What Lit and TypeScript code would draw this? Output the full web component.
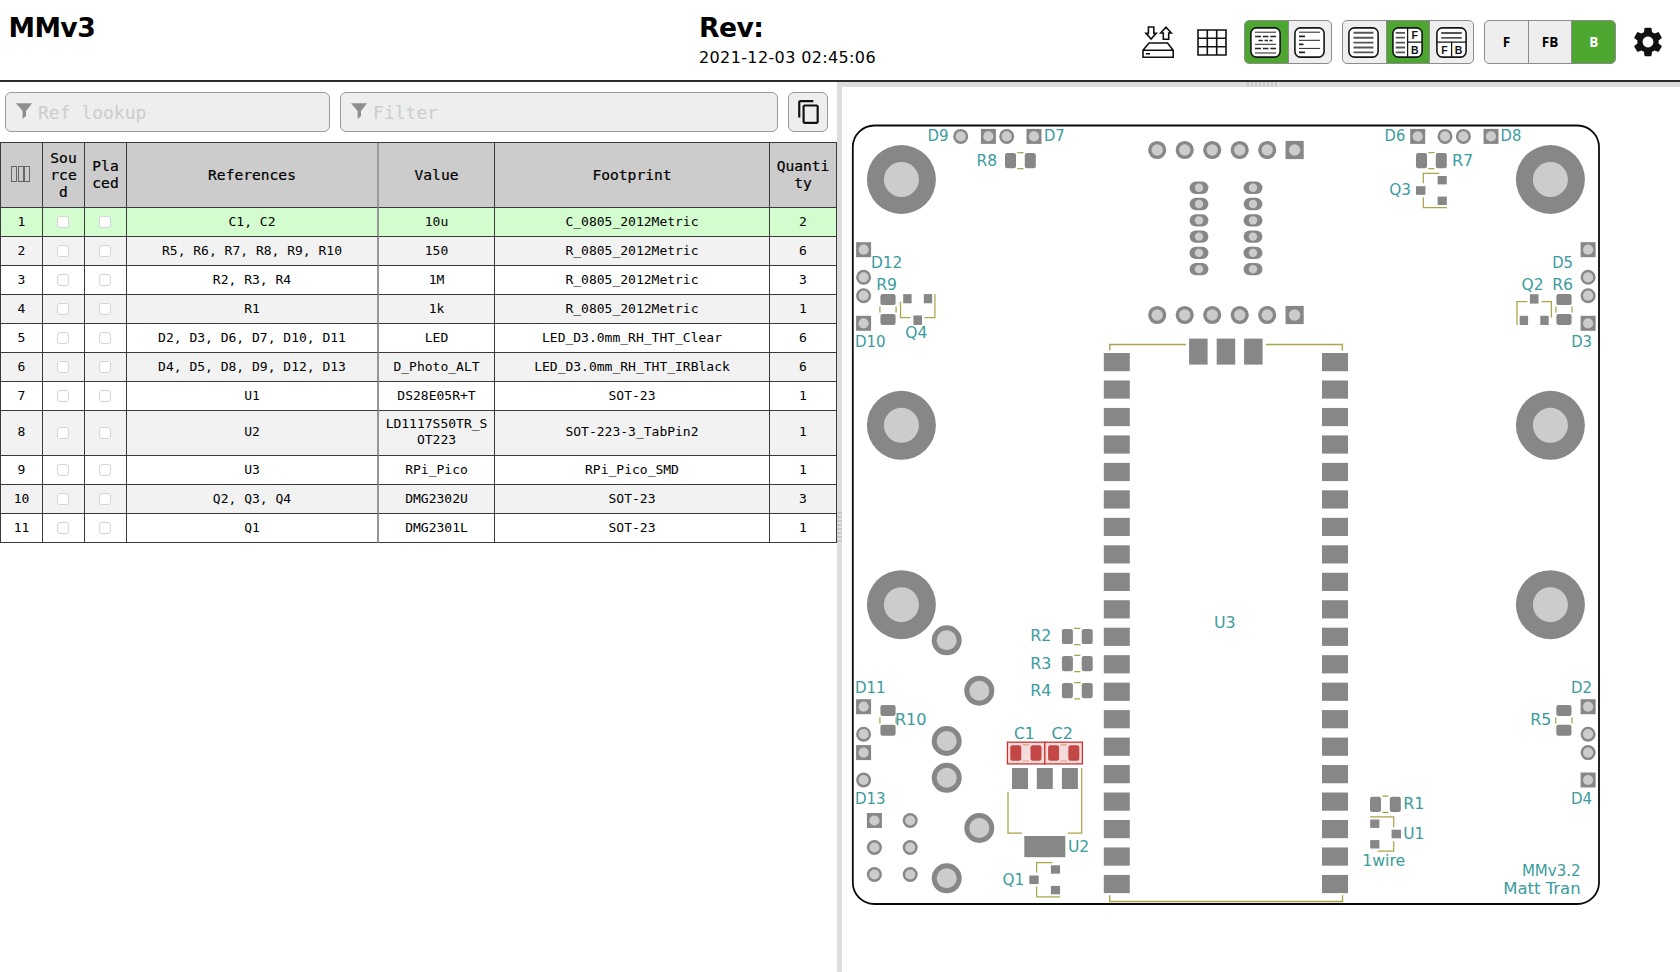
import { LitElement, html, svg, css } from "lit";
import { customElement } from "lit/decorators.js";

const ROWS: [string, string, string, string][] = [
  ["C1, C2", "10u", "C_0805_2012Metric", "2"],
  ["R5, R6, R7, R8, R9, R10", "150", "R_0805_2012Metric", "6"],
  ["R2, R3, R4", "1M", "R_0805_2012Metric", "3"],
  ["R1", "1k", "R_0805_2012Metric", "1"],
  ["D2, D3, D6, D7, D10, D11", "LED", "LED_D3.0mm_RH_THT_Clear", "6"],
  ["D4, D5, D8, D9, D12, D13", "D_Photo_ALT", "LED_D3.0mm_RH_THT_IRBlack", "6"],
  ["U1", "DS28E05R+T", "SOT-23", "1"],
  ["U2", "LD1117S50TR_SOT223", "SOT-223-3_TabPin2", "1"],
  ["U3", "RPi_Pico", "RPi_Pico_SMD", "1"],
  ["Q2, Q3, Q4", "DMG2302U", "SOT-23", "3"],
  ["Q1", "DMG2301L", "SOT-23", "1"],
];

// label, left ink edge, right ink edge, baseline
const LABELS: [string, number, number, number][] = [
  ["D9", 928.7, 947.3, 142], ["D7", 1045, 1063.3, 142],
  ["R8", 977.7, 995.7, 166.3], ["D12", 872, 901, 269],
  ["R9", 877.3, 895.7, 290.7], ["Q4", 906.3, 926, 339],
  ["D10", 856, 884.3, 347.3], ["D6", 1385.7, 1404, 142],
  ["D8", 1501.7, 1520, 142], ["R7", 1453, 1472, 166.3],
  ["Q3", 1390.3, 1409.7, 196], ["D5", 1553.3, 1571.7, 269],
  ["Q2", 1522.7, 1542.3, 290.7], ["R6", 1553.3, 1571.7, 290.7],
  ["D3", 1572.3, 1590.7, 347.3], ["U3", 1215, 1234.3, 628.7],
  ["R2", 1031.3, 1050, 642], ["R3", 1031.3, 1050, 669.3],
  ["R4", 1031.3, 1050, 696.3], ["D11", 856, 884.3, 693.7],
  ["R10", 896, 925.3, 726], ["C1", 1015, 1033.3, 740],
  ["C2", 1052.7, 1071.7, 740], ["D13", 856, 884.3, 804.3],
  ["U2", 1069, 1088, 853], ["Q1", 1003.7, 1023, 885.3],
  ["D2", 1572, 1590.7, 693.7], ["R5", 1531.3, 1550, 726],
  ["D4", 1572, 1590.7, 804.3], ["R1", 1404.3, 1423, 810],
  ["U1", 1404.3, 1423, 839.3], ["1wire", 1363.3, 1404, 866.7],
  ["MMv3.2", 1523, 1579.3, 876.7], ["Matt Tran", 1504.3, 1579.3, 894.7],
];

const square = (x: number, y: number, s = 15, r = 5.1) => svg`
  <rect class="pad" x=${x - s / 2} y=${y - s / 2} width=${s} height=${s}></rect>
  <circle class="hole" cx=${x} cy=${y} r=${r}></circle>`;
const round = (x: number, y: number, r = 7.5, h = 5.1) => svg`
  <circle class="pad" cx=${x} cy=${y} r=${r}></circle>
  <circle class="hole" cx=${x} cy=${y} r=${h}></circle>`;
const oval = (x: number, y: number) => svg`
  <rect class="pad" x=${x - 9.4} y=${y - 6.2} width="18.8" height="12.4" rx="6.2"></rect>
  <circle class="hole" cx=${x} cy=${y} r="4.2"></circle>`;
const chip = (x: number, y: number, rot = 0) => svg`
  <g transform="translate(${x} ${y}) rotate(${rot})">
    <rect class="pad" x="-15.4" y="-7.6" width="11" height="15.2" rx="2.2"></rect>
    <rect class="pad" x="4.4" y="-7.6" width="11" height="15.2" rx="2.2"></rect>
    <path class="silk" d="M-3.1-8.1H3.1M-3.1 8.1H3.1"></path>
  </g>`;
const cap = (x: number, y: number) => svg`
  <g transform="translate(${x} ${y})">
    <rect class="sel-pad" x="-15.6" y="-7.7" width="11" height="15.4" rx="2.2"></rect>
    <rect class="sel-pad" x="4.6" y="-7.7" width="11" height="15.4" rx="2.2"></rect>
    <path class="sel-silk" d="M-3.3-8.2H3.3M-3.3 8H3.3"></path>
  </g>`;
const sot = (x: number, y: number, rot = 0) => svg`
  <g transform="translate(${x} ${y}) rotate(${rot})">
    <rect class="pad" x="-15.3" y="-4.3" width="9.4" height="8.6"></rect>
    <rect class="pad" x="6.3" y="-14.5" width="9.2" height="8.4"></rect>
    <rect class="pad" x="6.3" y="6.1" width="9.2" height="8.4"></rect>
    <path class="silk" d="M8-17.2H-8V-7.2M-8 6.8V17.2H15.6"></path>
  </g>`;
const range = (n: number) => Array.from({ length: n }, (_, i) => i);

@customElement("pcb-board")
class PcbBoard extends LitElement {
  static styles = css`
    :host { display: block; flex: 1; min-height: 0; background: #fff; }
    svg { display: block; width: 838px; height: 885px; }
    .edge { fill: none; stroke: #0a0a0a; stroke-width: 1.8; }
    .pad { fill: #878787; }
    .hole { fill: #ccc; }
    .silk { fill: none; stroke: #a9a548; stroke-width: 1.25; }
    .bold { stroke-width: 1.4; }
    .sel-box { fill: #f5dcdc; stroke: #cb3634; stroke-width: 1.3; }
    .sel-pad { fill: #c24745; }
    .sel-silk { fill: none; stroke: #d3a882; stroke-width: 1.2; }
    .label { fill: #3a9c9d; font: 16px "DejaVu Sans", sans-serif; }
  `;
  render() {
    return html`<svg viewBox="842 87 838 885">
      ${[901.4, 1550.4].map((x) => [179.5, 425.3, 604.7].map((y) => round(x, y, 34.5, 17.5)))}
      ${[[946.7, 640.3], [979.3, 690.7], [946.7, 741], [946.7, 777.8], [979.3, 828], [946.7, 878.3]].map(([x, y]) => round(x, y, 15, 10))}
      ${round(960.7, 136.4)}${square(988.4, 136.4)}${round(1006.7, 136.4)}${square(1034, 136.4)}
      ${square(1417.7, 136.4)}${round(1445, 136.4)}${round(1463.4, 136.4)}${square(1491, 136.4)}
      ${[863.6, 1588.1].map((x) => svg`${square(x, 249.7)}${round(x, 277.3)}${round(x, 295.7)}${square(x, 323.3)}`)}
      ${square(863.6, 706.7)}${round(863.6, 734.2)}${square(863.6, 752.6)}${round(863.6, 780)}
      ${square(1588.1, 706.7)}${round(1588.1, 734.2)}${round(1588.1, 752.6)}${square(1588.1, 780)}
      ${square(874.4, 820.5)}${round(910.2, 820.5)}
      ${[847.5, 874.5].map((y) => [874.4, 910.2].map((x) => round(x, y)))}
      ${[150, 315].map((y) => svg`${range(5).map((i) => round(1157.2 + i * 27.5, y, 9.1, 5.7))}${square(1294.6, y, 18.2, 5.7)}`)}
      ${[1199, 1253].map((x) => range(6).map((i) => oval(x, 187.8 + i * 16.27)))}
      ${[1103.8, 1322].map((x) => range(20).map((i) => svg`<rect class="pad" x=${x} y=${353 + i * 27.47} width="26" height="18.2"></rect>`))}
      ${[1189.1, 1216.7, 1244.1].map((x) => svg`<rect class="pad" x=${x} y="338.6" width="18.5" height="26"></rect>`)}
      <path class="silk bold" d="M1109.7 350.5V344.5H1186M1266 344.5H1342.4V350.5M1109.7 895.3V901.5H1342.5V895.3"></path>
      ${chip(1020.4, 160.6)}${chip(1431.4, 160.6)}${chip(1077.3, 636.5)}${chip(1077.3, 663.6)}${chip(1077.3, 690.7)}${chip(1385.4, 804.3)}
      ${chip(888, 309.5, 90)}${chip(1564, 309.5, 90)}${chip(888, 720.3, 90)}${chip(1563.9, 720.3, 90)}
      ${sot(1431.3, 190.5)}${sot(1044.6, 879.8)}${sot(1385.7, 834, 180)}${sot(917.7, 309.6, -90)}${sot(1534.2, 309.5, 90)}
      ${[1012, 1036.8, 1061.9].map((x) => svg`<rect class="pad" x=${x} y="768" width="16" height="21"></rect>`)}
      <rect class="pad" x="1024.3" y="836" width="41" height="21.2"></rect>
      <path class="silk" d="M1008 792V833H1022M1067.7 833H1081.7V768"></path>
      <rect class="sel-box" x="1007.4" y="742.2" width="37.4" height="21.7"></rect>
      <rect class="sel-box" x="1044.8" y="742.2" width="37.6" height="21.7"></rect>
      ${cap(1025.9, 753)}${cap(1063.7, 753)}
      <rect class="edge" x="852.8" y="125.5" width="746.2" height="778.5" rx="21.5"></rect>
      ${LABELS.map(([t, a, b, y]) => svg`<text class="label" x=${a - 1.1} y=${y - 0.6} textLength=${b - a + 2.4} lengthAdjust="spacingAndGlyphs">${t}</text>`)}
    </svg>`;
  }
}

const funnel = html`<svg class="funnel" viewBox="0 0 16 16"><path d="M0 .3H16L10 8V13L6.6 16V8Z" fill="#8e8e8e"></path></svg>`;
const frame = svg`<rect x=".9" y=".9" width="29.2" height="29.2" rx="5.5" fill="#fff" stroke="#151515" stroke-width="1.6"></rect>`;

@customElement("app-root")
class AppRoot extends LitElement {
  static styles = css`
    :host { display: flex; flex-direction: column; height: 972px; overflow: hidden; background: #fff; color: #000; font-family: "DejaVu Sans", sans-serif; }
    * { box-sizing: border-box; }
    svg { display: block; }
    .header { display: flex; height: 82px; flex: none; border-bottom: 2px solid #2b2b2b; }
    .name { width: 699px; padding: 12px 0 0 8.5px; }
    .info { flex: 1; padding-top: 12px; }
    .title { font-size: 26.67px; line-height: 32px; font-weight: bold; letter-spacing: -0.6px; }
    .date { margin-top: 4px; font-size: 16px; line-height: 20px; letter-spacing: 0.37px; }
    .tools { display: flex; align-items: center; height: 44px; margin-top: 20px; padding-right: 15px; }
    .save { width: 32px; height: 32px; margin-right: 23px; }
    .grid { width: 30px; height: 27px; margin-right: 17px; }
    .gear { width: 34px; height: 34px; margin-left: 5px; }
    .group { display: flex; height: 44px; border: 1px solid #8c8c8c; border-radius: 5px; overflow: hidden; background: #eee; margin-right: 10px; }
    .two { width: 88px; }
    .three { width: 132px; }
    .btn { flex: 1; display: flex; align-items: center; justify-content: center; font: bold 13.5px "Open Sans", sans-serif; border-left: 1px solid #8c8c8c; }
    .btn:first-child { border-left: 0; }
    .btn.on { background: #4ca62f; color: #fff; }
    .btn svg { width: 31px; height: 31px; margin-left: -1px; }
    .ico-txt { font: bold 10.5px "Liberation Sans", sans-serif; fill: #111; text-anchor: middle; }
    .main { display: flex; flex: 1; min-height: 0; }
    .left { width: 837px; flex: none; }
    .split { width: 5px; flex: none; background: #ddd; display: flex; flex-direction: column; align-items: center; padding-top: 430px; }
    .grip-v { width: 5px; height: 30px; background: repeating-linear-gradient(#c8c8c8 0 2px, #ddd 2px 4px); }
    .right { flex: 1; display: flex; flex-direction: column; }
    .hsplit { height: 5px; flex: none; background: #ddd; margin-left: -1px; display: flex; padding-left: 406px; }
    .grip-h { width: 30px; height: 5px; background: repeating-linear-gradient(90deg, #c8c8c8 0 2px, #ddd 2px 4px); }
    .filters { display: flex; padding: 10px 9px 10px 5px; height: 60px; gap: 10.5px; }
    .field { display: flex; align-items: center; height: 40px; border: 1px solid #999; border-radius: 6px; background: #eee; padding-left: 10px; gap: 6px; font: 18px "DejaVu Sans Mono", monospace; color: #ccc; }
    .ref { width: 325px; }
    .flt { width: 438px; }
    .funnel { width: 16px; height: 16px; margin-top: -3px; }
    .copy { width: 40px; height: 40px; border: 1px solid #999; border-radius: 6px; background: #eee; display: flex; align-items: center; justify-content: center; padding-left: 1px; }
    .copy svg { width: 26px; height: 26px; flex: none; }
    table { width: 837px; table-layout: fixed; border-collapse: separate; border-spacing: 0; border-top: 1px solid #3a3a3a; font-family: "DejaVu Sans Mono", monospace; }
    th, td { border-right: 1px solid #3a3a3a; border-bottom: 1px solid #3a3a3a; padding: 0 7px 2px; text-align: center; vertical-align: middle; word-break: break-all; }
    th:first-child, td:first-child { border-left: 1px solid #3a3a3a; padding: 0 0 2px; }
    th:nth-child(4), td:nth-child(4) { border-right: 2px solid #979797; }
    th { height: 65px; background: #ccc; font-weight: normal; font-size: 14.6px; line-height: 17px; -webkit-text-stroke: 0.2px #000; }
    th:last-child { padding: 0 6px 2px; }
    td { height: 29px; font-size: 13px; line-height: 17px; }
    td:nth-child(5) { padding: 0 6px 2px; }
    td.check { padding: 0 8px 1px 6px; }
    .tall td { height: 45px; line-height: 16.5px; }
    tbody tr:nth-child(even) { background: #f2f2f2; }
    tbody tr.hl { background: #d3fdce; }
    .c0 { width: 43px; } .c1 { width: 42px; } .c3 { width: 252px; } .c4 { width: 116px; } .c5 { width: 275px; } .c6 { width: 67px; }
    .box { display: block; width: 12px; height: 12px; margin: 0 auto; background: #fff; border: 1px solid #d4d4d4; border-radius: 3px; }
    .cols { display: flex; justify-content: center; gap: 0.5px; padding-right: 2px; }
    .cols i { width: 6px; height: 16px; border: 1px solid #666; }
  `;

  private header() {
    return html`<div class="header">
      <div class="name"><div class="title">MMv3</div></div>
      <div class="info"><div class="title">Rev:</div><div class="date">2021-12-03 02:45:06</div></div>
      <div class="tools">
        <svg class="save" viewBox="0 0 32 32" fill="none" stroke="#111" stroke-width="1.6">
          <path d="M6.4 1H11.8V7.4H14.2L9.1 13L4 7.4H6.4ZM21.3 13.2V7H18.7L24 1.2L29.3 7H26.7V13.2Z"></path>
          <path d="M1 24.3L7 17H25.5L31.2 24.3V31.2H1ZM1 24.3H31.2M3.8 27.7H8"></path>
        </svg>
        <svg class="grid" viewBox="0 0 30 27" fill="none" stroke="#111" stroke-width="1.6">
          <path d="M1 1H29V26H1ZM10.3 1V26M19.7 1V26M1 9.3H29M1 17.7H29"></path>
        </svg>
        <div class="group two">
          <div class="btn on"><svg viewBox="0 0 31 31">${frame}
            <path d="M5 5.2H26M5 17.3H26M5 26H26" stroke="#222"></path>
            <path d="M5 9.5H11M12.8 9.5H18.5M20.3 9.5H26M8.5 13.5H12.8M14.6 13.5H18M19.5 13.5H22.5M5 21.5H11M12.8 21.5H18.5M20.3 21.5H26" stroke="#222" stroke-width="1.7"></path></svg></div>
          <div class="btn"><svg viewBox="0 0 31 31">${frame}
            <path d="M5 5.2H26M5 13.3H26M5 21.4H26" stroke="#222"></path>
            <path d="M5 9.4H11M5 17.4H9.5M5 25.4H11" stroke="#222" stroke-width="1.7"></path></svg></div>
        </div>
        <div class="group three">
          <div class="btn"><svg viewBox="0 0 31 31">${frame}
            <path d="M5.5 5.8H25.5M5.5 10.7H25.5M5.5 15.6H25.5M5.5 20.5H25.5M5.5 25.4H25.5" stroke="#555" stroke-width="1.9"></path></svg></div>
          <div class="btn on"><svg viewBox="0 0 31 31">${frame}
            <path d="M3.7 5.8H13M3.7 10.7H13M3.7 15.6H13M3.7 20.5H13M3.7 25.4H13" stroke="#555" stroke-width="1.8"></path>
            <path d="M15.6 1V30M15.6 15.2H30" stroke="#151515" stroke-width="1.3"></path>
            <text class="ico-txt" x="22.6" y="12">F</text><text class="ico-txt" x="22.8" y="26.6">B</text></svg></div>
          <div class="btn"><svg viewBox="0 0 31 31">${frame}
            <path d="M5.2 6H25.8M5.2 10.8H25.8" stroke="#555" stroke-width="1.8"></path>
            <path d="M1 15.2H30M15.6 15.2V30" stroke="#151515" stroke-width="1.3"></path>
            <text class="ico-txt" x="8.4" y="26.6">F</text><text class="ico-txt" x="22.6" y="26.6">B</text></svg></div>
        </div>
        <div class="group three"><div class="btn">F</div><div class="btn">FB</div><div class="btn on">B</div></div>
        <svg class="gear" viewBox="0 0 24 24"><path fill="#111" d="M19.43 12.98c.04-.32.07-.64.07-.98s-.03-.66-.07-.98l2.11-1.65c.19-.15.24-.42.12-.64l-2-3.46c-.12-.22-.39-.3-.61-.22l-2.49 1c-.52-.4-1.08-.73-1.69-.98l-.38-2.65C14.46 2.18 14.25 2 14 2h-4c-.25 0-.46.18-.49.42l-.38 2.65c-.61.25-1.17.59-1.69.98l-2.49-1c-.23-.09-.49 0-.61.22l-2 3.46c-.13.22-.07.49.12.64l2.11 1.65c-.04.32-.07.65-.07.98s.03.66.07.98l-2.11 1.65c-.19.15-.24.42-.12.64l2 3.46c.12.22.39.3.61.22l2.49-1c.52.4 1.08.73 1.69.98l.38 2.65c.03.24.24.42.49.42h4c.25 0 .46-.18.49-.42l.38-2.65c.61-.25 1.17-.59 1.69-.98l2.49 1c.23.09.49 0 .61-.22l2-3.46c.12-.22.07-.49-.12-.64l-2.11-1.65zM12 15.8c-2.1 0-3.8-1.7-3.8-3.8s1.7-3.8 3.8-3.8 3.8 1.7 3.8 3.8-1.7 3.8-3.8 3.8z"></path></svg>
      </div>
    </div>`;
  }

  render() {
    return html`${this.header()}
      <div class="main">
        <div class="left">
          <div class="filters">
            <div class="field ref">${funnel}<span>Ref lookup</span></div>
            <div class="field flt">${funnel}<span>Filter</span></div>
            <div class="copy"><svg viewBox="0 0 24 24"><path fill="#111" d="M16 1H4c-1.1 0-2 .9-2 2v14h2V3h12V1zm3 4H8c-1.1 0-2 .9-2 2v14c0 1.1.9 2 2 2h11c1.1 0 2-.9 2-2V7c0-1.1-.9-2-2-2zm0 16H8V7h11v14z"></path></svg></div>
          </div>
          <table>
            <colgroup><col class="c0"><col class="c1"><col class="c1"><col class="c3"><col class="c4"><col class="c5"><col class="c6"></colgroup>
            <thead><tr>
              <th><div class="cols"><i></i><i></i><i></i></div></th>
              <th>Sourced</th><th>Placed</th><th>References</th><th>Value</th><th>Footprint</th><th>Quantity</th>
            </tr></thead>
            <tbody>${ROWS.map(([refs, value, fp, qty], i) => html`
              <tr class=${i === 0 ? "hl" : i === 7 ? "tall" : ""}>
                <td>${i + 1}</td><td class="check"><span class="box"></span></td><td class="check"><span class="box"></span></td>
                <td>${refs}</td><td>${value}</td><td>${fp}</td><td>${qty}</td>
              </tr>`)}</tbody>
          </table>
        </div>
        <div class="split"><div class="grip-v"></div></div>
        <div class="right">
          <div class="hsplit"><div class="grip-h"></div></div>
          <pcb-board></pcb-board>
        </div>
      </div>`;
  }
}
